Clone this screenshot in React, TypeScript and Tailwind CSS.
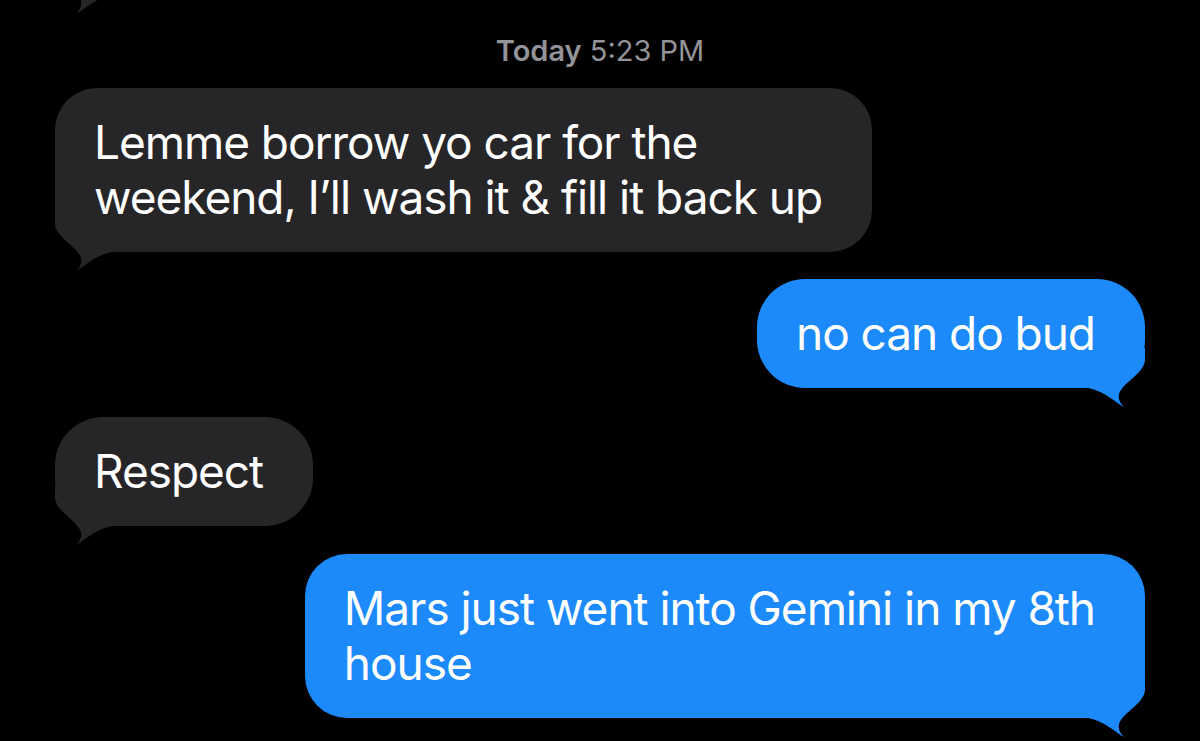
import type { ReactNode } from 'react'

const GRAY = '#262629'
const BLUE = '#1c8afa'

const TAIL_PATH =
  'M0,-40 L0,-28 C1,-14 22,-6 26,6 C27,11 25,15 21,19 C29,15 40,3 57,0 L57,-40 Z'

function Tail({ side, color }: { side: 'left' | 'right'; color: string }) {
  const pos = side === 'left' ? 'left-0' : 'right-0'
  return (
    <svg
      className={`absolute ${pos} bottom-[-20px] pointer-events-none`}
      width="60"
      height="60"
      viewBox="0 -40 60 60"
    >
      <path
        d={TAIL_PATH}
        fill={color}
        transform={side === 'right' ? 'translate(60,0) scale(-1,1)' : undefined}
      />
    </svg>
  )
}

function Bubble({
  side,
  children,
  rounded,
}: {
  side: 'left' | 'right'
  children: ReactNode
  rounded: string
}) {
  const color = side === 'left' ? GRAY : BLUE
  return (
    <div className={`flex ${side === 'left' ? 'justify-start' : 'justify-end'}`}>
      <div className="relative">
        <Tail side={side} color={color} />
        <div
          className={`relative ${rounded} pl-[39px] pr-[50px] py-[27px] text-white text-[46px] leading-[55px] tracking-[-1.05px] whitespace-nowrap`}
          style={{ backgroundColor: color }}
        >
          {children}
        </div>
      </div>
    </div>
  )
}

export default function App() {
  return (
    <div
      className="w-[1200px] h-[741px] overflow-hidden bg-black px-[55px]"
      style={{ fontFamily: 'Inter, "Noto Sans", sans-serif' }}
    >
      {/* tail of the bubble above, cut off by the top edge */}
      <div className="relative h-[13px] overflow-hidden">
        <svg className="absolute left-0 top-[-45px]" width="60" height="60" viewBox="0 -40 60 60">
          <path d={TAIL_PATH} fill={GRAY} />
        </svg>
      </div>

      <div className="mt-[20px] text-center text-[29px] leading-[36px] text-[#939398]">
        <span className="font-semibold">Today</span> 5:23 PM
      </div>

      <div className="mt-[19px]">
        <Bubble side="left" rounded="rounded-[42px]">
          Lemme borrow yo car for the
          <br />
          weekend, I’ll wash it &amp; fill it back up
        </Bubble>
      </div>

      <div className="mt-[27px]">
        <Bubble side="right" rounded="rounded-[48px]">
          no can do bud
        </Bubble>
      </div>

      <div className="mt-[29px]">
        <Bubble side="left" rounded="rounded-[48px]">
          Respect
        </Bubble>
      </div>

      <div className="mt-[28px]">
        <Bubble side="right" rounded="rounded-[42px]">
          Mars just went into Gemini in my 8th
          <br />
          house
        </Bubble>
      </div>
    </div>
  )
}
